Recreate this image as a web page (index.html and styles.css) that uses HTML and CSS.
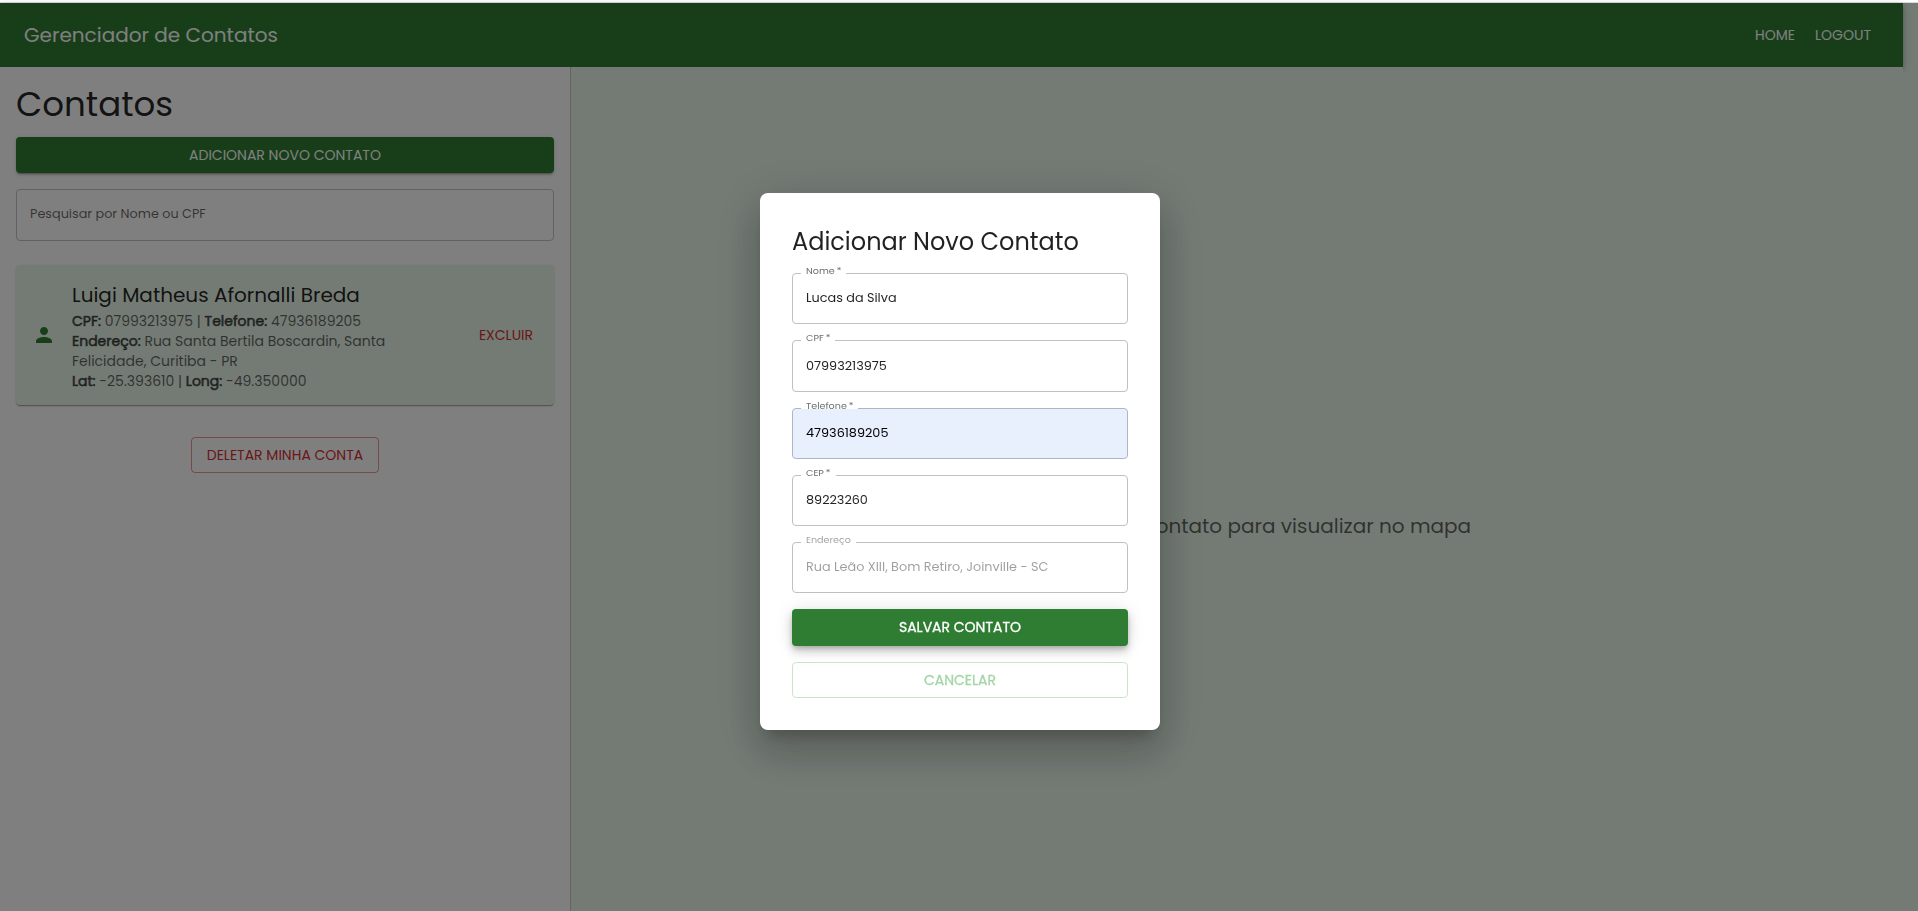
FILE: index.html
```html
<!DOCTYPE html>
<html lang="pt-BR">
<head>
<meta charset="utf-8">
<title>Gerenciador de Contatos</title>
<link rel="stylesheet" href="styles.css">
</head>
<body>
<div class="top-strip"></div>
<div class="app">
  <header class="app-bar">
    <div class="brand">Gerenciador de Contatos</div>
    <nav class="nav"><a>HOME</a><a>LOGOUT</a></nav>
  </header>
  <main class="layout">
    <aside class="sidebar">
      <h1 class="page-title">Contatos</h1>
      <button class="btn btn-add">ADICIONAR NOVO CONTATO</button>
      <div class="search">Pesquisar por Nome ou CPF</div>
      <article class="card">
        <svg class="person" viewBox="0 0 24 24"><path d="M12 12c2.21 0 4-1.79 4-4s-1.79-4-4-4-4 1.79-4 4 1.79 4 4 4zm0 2c-2.67 0-8 1.34-8 4v2h16v-2c0-2.66-5.33-4-8-4z"/></svg>
        <div class="card-body">
          <div class="card-name">Luigi Matheus Afornalli Breda</div>
          <div class="line"><b>CPF:</b> 07993213975 | <b>Telefone:</b> 47936189205</div>
          <div class="line"><b>Endereço:</b> Rua Santa Bertila Boscardin, Santa</div>
          <div class="line">Felicidade, Curitiba - PR</div>
          <div class="line"><b>Lat:</b> -25.393610 | <b>Long:</b> -49.350000</div>
        </div>
        <button class="btn btn-remove">EXCLUIR</button>
      </article>
      <button class="btn btn-delete">DELETAR MINHA CONTA</button>
    </aside>
    <section class="map"><p class="map-hint">Selecione um contato para visualizar no mapa</p></section>
  </main>
</div>
<div class="backdrop">
  <div class="dialog">
    <h2 class="dialog-title">Adicionar Novo Contato</h2>
    <div class="field"><span class="label l-nome">Nome&thinsp;*</span><span class="value">Lucas da Silva</span></div>
    <div class="field"><span class="label l-cpf">CPF&thinsp;*</span><span class="value">07993213975</span></div>
    <div class="field autofill"><span class="label l-tel">Telefone&thinsp;*</span><span class="value">47936189205</span></div>
    <div class="field"><span class="label l-cep">CEP&thinsp;*</span><span class="value">89223260</span></div>
    <div class="field disabled"><span class="label l-end">Endereço</span><span class="value">Rua Leão XIII, Bom Retiro, Joinville - SC</span></div>
    <button class="btn btn-save">SALVAR CONTATO</button>
    <button class="btn btn-cancel">CANCELAR</button>
  </div>
</div>
</body>
</html>
```
FILE: styles.css
```css
* { box-sizing: border-box; }
body {
  margin: 0;
  height: 911px;
  overflow: hidden;
  display: flex;
  flex-direction: column;
  background: #e8f5e9;
  color: rgba(0, 0, 0, .87);
  font-family: Poppins, Inter, sans-serif;
}
h1, h2, p { margin: 0; font-weight: 400; }
.top-strip { height: 3px; flex: none; background: #fff; border-bottom: 1px solid #d9dbe0; }
.app { flex: 1; width: 1903px; display: flex; flex-direction: column; }

.app-bar {
  height: 64px;
  flex: none;
  display: flex;
  align-items: center;
  justify-content: space-between;
  padding: 0 32px 0 24px;
  background: #2e7d32;
  color: #fff;
  box-shadow: 0 2px 4px -1px rgba(0,0,0,.2), 0 4px 5px rgba(0,0,0,.14), 0 1px 10px rgba(0,0,0,.12);
}
.brand { font-size: 20px; line-height: 32px; }
.nav { display: flex; gap: 20px; font-size: 14px; line-height: 24px; }

.layout { flex: 1; display: flex; position: relative; }
.sidebar {
  width: 571px;
  padding: 16px;
  display: flex;
  flex-direction: column;
  background: #fff;
  border-right: 1px solid #c8c8c8;
}
.page-title { font-size: 34px; line-height: 42px; margin-bottom: 12px; }

.btn {
  height: 36px;
  flex: none;
  padding: 0;
  border: 0;
  border-radius: 4px;
  background: none;
  font: 400 14px/24px Poppins, Inter, sans-serif;
}
.btn-add {
  background: #2e7d32;
  color: #fff;
  box-shadow: 0 3px 1px -2px rgba(0,0,0,.2), 0 2px 2px rgba(0,0,0,.14), 0 1px 5px rgba(0,0,0,.12);
}
.search {
  height: 52px;
  margin: 16px 0 24px;
  padding: 0 13px 3px;
  display: flex;
  align-items: center;
  border: 1px solid #c4c4c4;
  border-radius: 4px;
  color: rgba(0, 0, 0, .6);
  font-size: 12.8px;
}
.card {
  height: 140px;
  padding: 0 16px;
  display: flex;
  align-items: center;
  background: #e8f5e9;
  border-radius: 4px;
  box-shadow: 0 2px 1px -1px rgba(0,0,0,.2), 0 1px 1px rgba(0,0,0,.14), 0 1px 3px rgba(0,0,0,.12);
}
.person { width: 24px; height: 24px; fill: #2e7d32; margin-right: 16px; }
.card-body { flex: 1; padding-top: 1px; }
.card-name { font-size: 20px; line-height: 31px; }
.line { font-size: 14px; line-height: 20px; color: rgba(0, 0, 0, .6); }
.line b { font-weight: 400; -webkit-text-stroke: .7px currentColor; }
.btn-remove { width: 64px; color: #d32f2f; }
.btn-delete {
  width: 188px;
  margin-top: 32px;
  align-self: center;
  border: 1px solid rgba(211, 47, 47, .5);
  color: #d32f2f;
}
.map { flex: 1; display: flex; align-items: center; justify-content: center; padding-top: 74px; background: #e8f5e9; }
.map-hint { font-size: 20px; line-height: 32px; color: rgba(0, 0, 0, .6); }

.backdrop {
  position: fixed;
  inset: 3px 0 0;
  padding-top: 9px;
  display: flex;
  align-items: center;
  justify-content: center;
  background: rgba(0, 0, 0, .5);
}
.dialog {
  width: 400px;
  margin-left: 2px;
  padding: 32px;
  display: flex;
  flex-direction: column;
  gap: 16px;
  background: #fff;
  border-radius: 8px;
  box-shadow: 0 11px 15px -7px rgba(0,0,0,.2), 0 24px 38px 3px rgba(0,0,0,.14), 0 9px 46px 8px rgba(0,0,0,.12);
}
.dialog-title { height: 32px; font-size: 24px; line-height: 33px; }
.field {
  position: relative;
  height: 51.2px;
  padding: 0 13px .8px;
  display: flex;
  align-items: center;
  border: 1px solid #c0c0c0;
  border-radius: 4px;
}
.autofill { background: #e8f0fe; border-color: #afb6c3; }
.autofill .value { color: #000; }
.label {
  position: absolute;
  left: 8px;
  top: -10px;
  height: 10px;
  padding-left: 5px;
  background: #fff;
  color: rgba(0, 0, 0, .6);
  font-size: 9.6px;
  line-height: 13px;
  white-space: nowrap;
}
.l-nome { width: 45px; }
.l-cpf { width: 34px; }
.l-tel { width: 57px; }
.l-cep { width: 35px; }
.l-end { width: 55px; }
.value { font-size: 12.8px; }
.disabled .label, .disabled .value { color: rgba(0, 0, 0, .38); }
.btn-save {
  height: 36.8px;
  background: #2e7d32;
  color: #fff;
  -webkit-text-stroke: .3px currentColor;
  box-shadow: 0 3px 5px -1px rgba(0,0,0,.2), 0 6px 10px rgba(0,0,0,.14), 0 1px 18px rgba(0,0,0,.12);
}
.btn-cancel { padding-top: 1px; border: 1px solid #c8e6c9; color: #a5d6a7; -webkit-text-stroke: .3px currentColor; }
```
